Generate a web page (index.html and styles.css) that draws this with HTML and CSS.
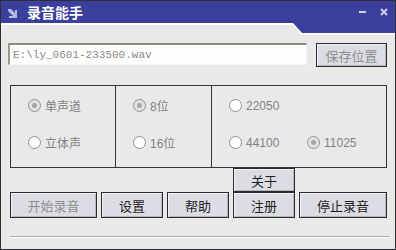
FILE: index.html
```html
<!DOCTYPE html>
<html>
<head>
    <meta charset="UTF-8">
    <title>录音能手</title>
    <link rel="stylesheet" href="styles.css">
</head>
<body>
<div id="window">
    <div id="title">
        <div id="title_bar">
            <div class="title_row">
                <svg class="app_icon" width="10" height="10" viewBox="0 0 10 10">
                    <path d="M0 0 L3 0 L7 4 L7 1 L9 1 L9 9 L1 9 L1 7 L5 7 L0 2 Z" fill="#b4b8dc"/>
                </svg>
                <span class="caption">录音能手</span>
                <span class="spacer"></span>
                <svg class="sys_btn" width="8" height="8" viewBox="0 0 8 8">
                    <rect x="0" y="3" width="7" height="2" fill="#d0d2ec"/>
                </svg>
                <svg class="sys_btn close" width="8" height="8" viewBox="0 0 8 8">
                    <path d="M1 1 L7 7 M7 1 L1 7" stroke="#d0d2ec" stroke-width="1.8"/>
                </svg>
            </div>
        </div>
    </div>

    <div id="path_row">
        <input id="path" value="E:\ly_0601-233500.wav" readonly />
        <div class="btn btn_save disabled">保存位置</div>
    </div>

    <div id="panel">
        <div class="col col_first">
            <div class="opt"><span class="radio checked"></span>单声道</div>
            <div class="opt"><span class="radio"></span>立体声</div>
        </div>
        <div class="col">
            <div class="opt"><span class="radio checked"></span>8位</div>
            <div class="opt"><span class="radio"></span>16位</div>
        </div>
        <div class="col col_rate">
            <div class="opt"><span class="radio"></span>22050</div>
            <div class="opt empty"></div>
            <div class="opt"><span class="radio"></span>44100</div>
            <div class="opt"><span class="radio checked"></span>11025</div>
        </div>
    </div>

    <div id="buttons">
        <div class="btn w_start disabled">开始录音</div>
        <div class="btn w_small">设置</div>
        <div class="btn w_small">帮助</div>
        <div class="stack">
            <div class="btn w_small about">关于</div>
            <div class="btn w_small">注册</div>
        </div>
        <div class="btn w_stop">停止录音</div>
    </div>

    <div id="sep"></div>
</div>
</body>
</html>
```

FILE: styles.css
```css
body {
    margin: 0px;
    font-family: "Liberation Sans", "Noto Sans CJK SC", sans-serif;
}

#window {
    width: 396px;
    height: 250px;
    box-sizing: border-box;
    border: 1px solid #2e2e36;
    background-color: #e9e9e9;
    overflow: hidden;
}

#title {
    height: 34px;
    background-color: #ffffff;
    clip-path: polygon(0 0, 100% 0, 100% 34px, 301px 34px, 292px 24px, 0 24px);
}

#title_bar {
    height: 32px;
    background-color: #3b409c;
    clip-path: polygon(0 0, 100% 0, 100% 32px, 301px 32px, 292px 22px, 0 22px);
}

.title_row {
    height: 22px;
    display: flex;
    align-items: center;
}

.app_icon {
    margin-left: 7px;
    margin-top: 3px;
}

.caption {
    margin-left: 9px;
    color: #ffffff;
    font-size: 14px;
    font-weight: bold;
}

.spacer {
    flex: 1;
}

.sys_btn {
    margin-right: 13px;
}

.sys_btn.close {
    margin-right: 7px;
}

#path_row {
    display: flex;
    align-items: flex-start;
    margin: 8px 0px 0px 7px;
}

#path {
    width: 299px;
    height: 22px;
    box-sizing: border-box;
    border-top: 2px solid #8c8a78;
    border-left: 2px solid #9c9a88;
    border-right: 1px solid #f4f4f4;
    border-bottom: 1px solid #f4f4f4;
    background-color: #fdfdfb;
    padding: 0px 0px 0px 3px;
    font-family: "Liberation Mono", monospace;
    font-size: 11px;
    color: #8a8a8a;
    outline: none;
}

.btn {
    box-sizing: border-box;
    height: 26px;
    border: 1px solid #2c2c30;
    background-color: #dcdde4;
    box-shadow: inset 1px 1px #f2f2f6, inset -1px -1px #b4b5bc;
    display: flex;
    align-items: center;
    justify-content: center;
    font-size: 13px;
    color: #1e1e1e;
}

.btn.disabled {
    color: #8e8e92;
}

.btn_save {
    width: 71px;
    height: 24px;
    margin-left: 9px;
}

#panel {
    margin: 18px 0px 0px 9px;
    width: 377px;
    height: 83px;
    box-sizing: border-box;
    border: 1px solid #34343a;
    display: grid;
    grid-template-columns: 104px 96px 1fr;
}

.col {
    border-left: 1px solid #34343a;
    padding: 13px 0px 0px 17px;
    display: flex;
    flex-direction: column;
    gap: 24px;
}

.col_first {
    border-left: none;
}

.col_rate {
    display: grid;
    grid-template-columns: 78px auto;
    gap: 24px 0px;
    align-content: start;
}

.opt {
    height: 13px;
    display: flex;
    align-items: center;
    font-size: 12px;
    color: #828286;
}

.radio {
    width: 13px;
    height: 13px;
    box-sizing: border-box;
    border: 1px solid #909094;
    border-radius: 50%;
    background-color: #ffffff;
    margin-right: 4px;
    position: relative;
    flex-shrink: 0;
}

.radio.checked {
    background-color: #e2e2e4;
}

.radio.checked::after {
    content: "";
    position: absolute;
    left: 3px;
    top: 3px;
    width: 5px;
    height: 5px;
    border-radius: 50%;
    background-color: #a6a6aa;
}

#buttons {
    display: flex;
    align-items: flex-end;
    gap: 4px;
    margin-left: 9px;
}

.stack {
    display: flex;
    flex-direction: column;
}

.about {
    height: 24px;
}

.w_start {
    width: 87px;
}

.w_small {
    width: 62px;
}

.w_stop {
    width: 88px;
}

#sep {
    margin: 18px 0px 0px 9px;
    width: 379px;
    border-top: 1px solid #a8a8ac;
    border-bottom: 1px solid #ffffff;
}
```
